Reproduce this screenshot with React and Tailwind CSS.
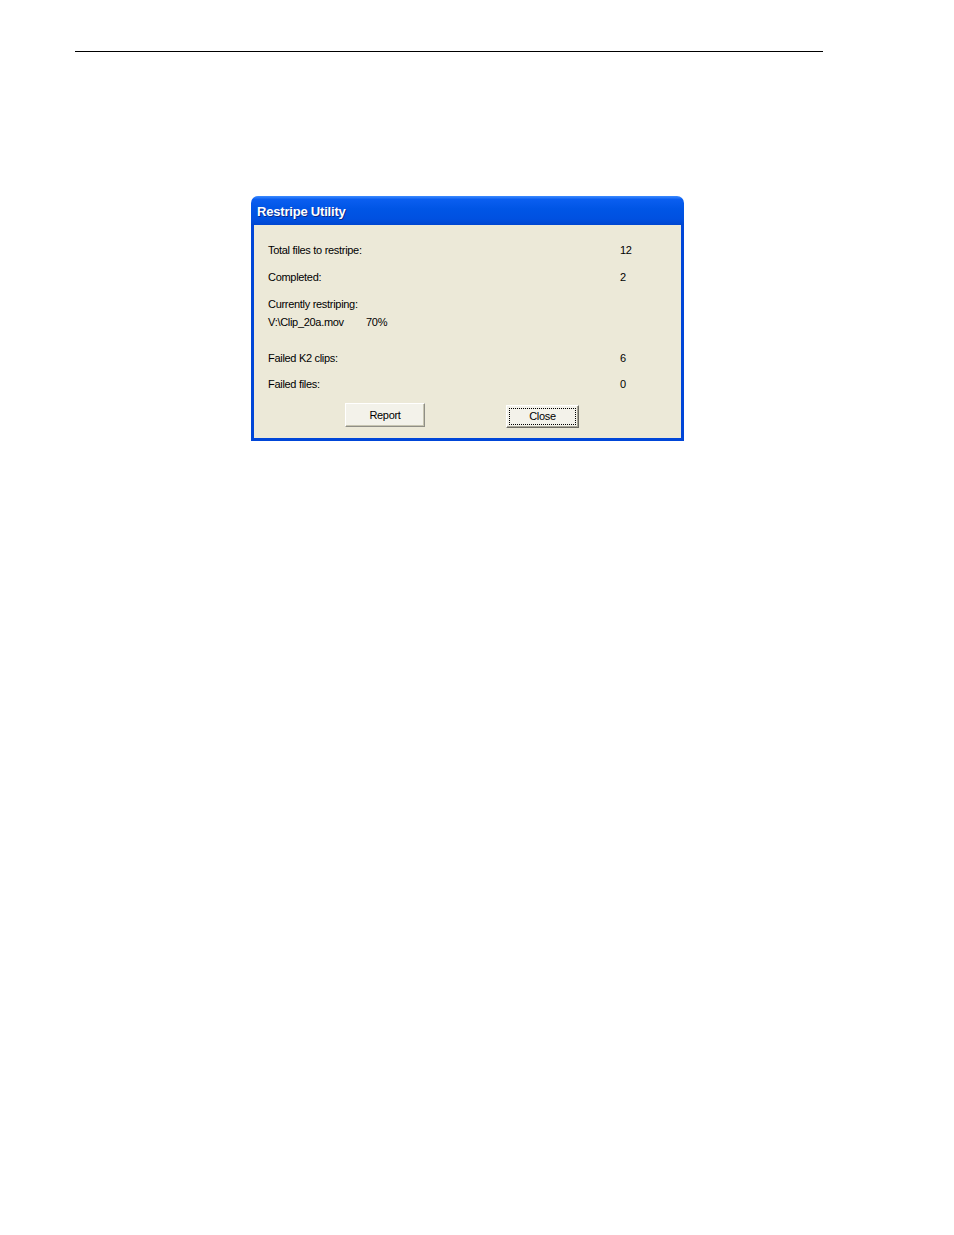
export default function App() {
  const rows = [
    { label: "Total files to restripe:", value: "12", mt: "mt-[18px]" },
    { label: "Completed:", value: "2", mt: "mt-[13px]" },
  ];
  return (
    <div className="w-[954px] h-[1235px] bg-white relative" style={{ fontFamily: "'Liberation Sans', Arial, sans-serif" }}>
      <div className="pt-[51px] pl-[75px]">
        <div className="w-[748px] h-px bg-black" />
      </div>

      <div className="ml-[251px] mt-[144px] w-[433px] h-[245px] flex flex-col">
        {/* Title bar */}
        <div className="h-[29px] rounded-t-[7px] flex items-center pl-[6px] pt-[3px] bg-[linear-gradient(180deg,#3d8bff_0%,#0a5ef0_12%,#0055e5_45%,#0050e0_80%,#0046d0_100%)]">
          <span className="text-white font-bold text-[13px] tracking-[-0.2px] [text-shadow:1px_1px_0_#0a2a8a]">Restripe Utility</span>
        </div>
        {/* Body */}
        <div className="flex-1 bg-[#ece9d8] border-x-[3px] border-b-[3px] border-[#0046d8] text-[11px] text-black tracking-[-0.3px] relative">
          <div className="pl-[14px]">
            {rows.map((r) => (
              <div key={r.label} className={"flex h-[14px] items-center " + r.mt}>
                <span className="w-[352px]">{r.label}</span>
                <span>{r.value}</span>
              </div>
            ))}
            <div className="flex h-[14px] items-center mt-[13px]">Currently restriping:</div>
            <div className="flex h-[14px] items-center mt-[4px]">
              <span className="w-[98px]">V:\Clip_20a.mov</span>
              <span>70%</span>
            </div>
            <div className="flex h-[14px] items-center mt-[22px]">
              <span className="w-[352px]">Failed K2 clips:</span>
              <span>6</span>
            </div>
            <div className="flex h-[14px] items-center mt-[12px]">
              <span className="w-[352px]">Failed files:</span>
              <span>0</span>
            </div>
          </div>
          <div className="flex mt-[12px]">
            <button className="ml-[91px] w-[80px] h-[24px] bg-[#f3f2ea] border border-t-white border-l-white border-r-[#8f8e86] border-b-[#8f8e86] shadow-[inset_-1px_-1px_0_#c7c5b2] flex items-center justify-center">
              Report
            </button>
            <button className="ml-[81px] mt-[2px] w-[73px] h-[23px] bg-[#f3f2ea] border border-t-white border-l-white border-r-[#6d6c64] border-b-[#6d6c64] shadow-[inset_-1px_-1px_0_#a9a798] flex items-center justify-center p-[2px]">
              <span className="w-full h-full border border-dotted border-black flex items-center justify-center">Close</span>
            </button>
          </div>
        </div>
      </div>
    </div>
  );
}
